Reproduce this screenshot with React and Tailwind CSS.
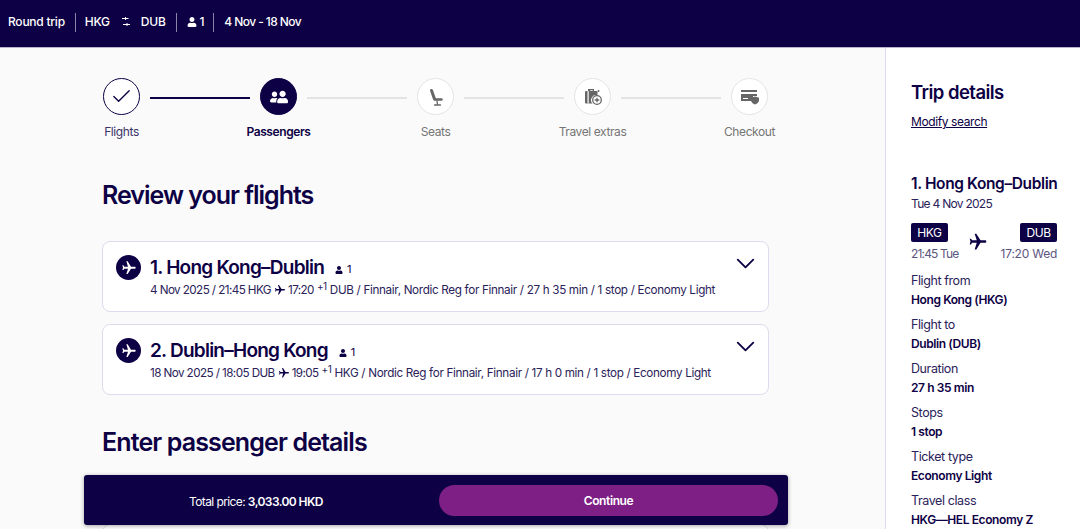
import { Check, ChevronDown } from "lucide-react";
import { MdFlight } from "react-icons/md";
import { FaUser, FaUserFriends } from "react-icons/fa";

const steps = [
  { label: "Flights", state: "done" },
  { label: "Passengers", state: "active" },
  { label: "Seats", state: "todo" },
  { label: "Travel extras", state: "todo" },
  { label: "Checkout", state: "todo" },
];

const details = [
  ["Flight from", "Hong Kong (HKG)"],
  ["Flight to", "Dublin (DUB)"],
  ["Duration", "27 h 35 min"],
  ["Stops", "1 stop"],
  ["Ticket type", "Economy Light"],
  ["Travel class", "HKG—HEL Economy Z"],
];

function SeatIcon() {
  return (
    <svg width="20" height="20" viewBox="0 0 20 20" fill="none" stroke="#666" strokeLinecap="round">
      <path d="M5.500 3.500L8.500 12" strokeWidth="3" />
      <path d="M9 12.500h6.500" strokeWidth="2.400" />
      <path d="M11 14l.5 3.500M8.500 18h6" strokeWidth="1.300" />
    </svg>
  );
}

function LuggageIcon() {
  return (
    <svg width="20" height="20" viewBox="0 0 20 20" fill="#666">
      <path d="M6 2h5v2h2.500a1 1 0 0 1 1 1v3.200a5 5 0 0 0-5 8.300H3a1 1 0 0 1-1-1V5a1 1 0 0 1 1-1h2V2zm1.200 1.200V4h2.600v-.8z" fillRule="evenodd" />
      <rect x="4.500" y="4" width="1.200" height="12.500" fill="#fff" />
      <circle cx="14" cy="13" r="4.300" fill="none" stroke="#666" strokeWidth="1.300" />
      <path d="M14 10.700v4.600M11.700 13h4.600" stroke="#666" strokeWidth="1.300" />
      <circle cx="15.500" cy="4" r="1" />
    </svg>
  );
}

function CardIcon() {
  return (
    <svg width="20" height="20" viewBox="0 0 20 20" fill="#666">
      <rect x="1" y="3" width="16" height="2" />
      <path d="M1 7h16v2h-4v2.500c0 .9.200 1.700.5 2.500H1zM3 11v1h5v-1z" fillRule="evenodd" />
      <path d="M15 9.500l4 1.200v2.300c0 2-1.700 3.500-4 4.500-2.300-1-4-2.500-4-4.500v-2.300z" />
    </svg>
  );
}

function StepIcon({ label }) {
  if (label === "Flights") return <Check size={23} color="#0d0044" strokeWidth={1.4} />;
  if (label === "Passengers") return <FaUserFriends size={18} color="#fff" className="-scale-x-100" />;
  if (label === "Seats") return <SeatIcon />;
  if (label === "Travel extras") return <LuggageIcon />;
  return <CardIcon />;
}

function Stepper() {
  return (
    <div className="flex items-start ml-[103px] w-[665px]">
      {steps.map((step, i) => (
        <div key={step.label} className={i === 0 ? "flex items-start" : "flex items-start flex-1"}>
          {i > 0 && (
            <div className={`flex-1 h-[2px] mt-[19px] mx-[10px] ${step.state === "todo" ? "bg-[#e4e4e4]" : "bg-[#0d0044]"}`} />
          )}
          <div className="flex flex-col items-center w-[37px] shrink-0">
            <div
              className={`w-[37px] h-[37px] rounded-full flex items-center justify-center border ${
                step.state === "active"
                  ? "bg-[#0d0044] border-[#0d0044]"
                  : step.state === "done"
                    ? "bg-white border-[#0d0044]"
                    : "bg-white border-[#e4e4e4]"
              }`}
            >
              <StepIcon label={step.label} />
            </div>
            <span
              className={`mt-[9px] text-[12px] leading-[16px] whitespace-nowrap ${
                step.state === "active"
                  ? "font-semibold text-[#0d0044]"
                  : step.state === "done"
                    ? "text-[#3a3268]"
                    : "text-[#757575]"
              }`}
            >
              {step.label}
            </span>
          </div>
        </div>
      ))}
    </div>
  );
}

function FlightCard({ title, date, dep, arrIata, rest }) {
  return (
    <div className="relative h-[71px] rounded-[8px] border border-[#dcdcee] bg-white pl-[13px] pt-[13px] flex gap-[9px]">
      <div className="w-[25px] h-[25px] rounded-full bg-[#0d0044] flex items-center justify-center shrink-0">
        <MdFlight size={16} color="#fff" className="rotate-90" />
      </div>
      <div className="min-w-0">
        <div className="flex items-center h-[25px]">
          <h3 className="text-[19px] leading-[25px] font-semibold text-[#0d0044] tracking-[-0.04em]">{title}</h3>
          <span className="flex items-center text-[11px] text-[#0d0044] mt-[4px] ml-[11px]">
            <FaUser size={8} className="mr-[4px]" />1
          </span>
        </div>
        <p className="mt-[2px] text-[11.7px] leading-[16px] text-[#2a2259] whitespace-nowrap flex items-center">
          <span className="tracking-[-0.05em]">{date}</span>
          <MdFlight size={12} color="#0d0044" className="rotate-90 ml-[3px] mr-[2px]" />
          <span className="tracking-[-0.05em]">{dep}</span>
          <sup className="text-[10px] ml-[3px] mr-[3px] mt-[2px]">+1</sup>
          <span className="tracking-[-0.0285em]">{arrIata} / {rest}</span>
        </p>
      </div>
      <ChevronDown size={31} strokeWidth={1.4} color="#0d0044" className="absolute right-[7px] top-[6px]" />
    </div>
  );
}

function Sidebar() {
  return (
    <aside className="w-[195px] shrink-0 border-l border-[#dcdcee] bg-white pl-[25px] pr-[23px] pt-[32px]">
      <h2 className="text-[18.500px] leading-[24px] font-semibold text-[#0d0044] tracking-[-0.03em]">Trip details</h2>
      <a className="block mt-[10px] text-[12px] leading-[16px] text-[#0d0044] underline">Modify search</a>

      <h3 className="mt-[44px] text-[15.500px] leading-[20px] font-semibold text-[#0d0044] tracking-[-0.025em] whitespace-nowrap">
        1. Hong Kong–Dublin
      </h3>
      <p className="mt-[2px] text-[12px] leading-[16px] text-[#2a2259] tracking-[-0.06em]">Tue 4 Nov 2025</p>

      <div className="mt-[11px] flex justify-between">
        <div>
          <span className="block w-[37px] h-[19px] bg-[#0d0044] rounded-[2px] text-white text-[12px] leading-[19px] text-center">HKG</span>
          <span className="block mt-[4px] text-[12px] leading-[16px] text-[#5b5580] whitespace-nowrap tracking-[-0.07em]">21:45 Tue</span>
        </div>
        <MdFlight size={20} color="#0d0044" className="rotate-90 mt-[9px] -ml-[4px]" />
        <div className="flex flex-col items-end">
          <span className="block w-[37px] h-[19px] bg-[#0d0044] rounded-[2px] text-white text-[12px] leading-[19px] text-center">DUB</span>
          <span className="block mt-[4px] text-[12px] leading-[16px] text-[#5b5580] whitespace-nowrap tracking-[-0.02em]">17:20 Wed</span>
        </div>
      </div>

      <dl className="mt-[8px]">
        {details.map(([label, value]) => (
          <div key={label} className="h-[44px] pt-[3px]">
            <dt className="text-[12.500px] leading-[16px] text-[#2a2259]">{label}</dt>
            <dd className="mt-[3px] text-[12px] leading-[16px] font-semibold text-[#0d0044] whitespace-nowrap">{value}</dd>
          </div>
        ))}
      </dl>
    </aside>
  );
}

export default function App() {
  return (
    <div className="relative h-[529px] w-[1080px] overflow-hidden bg-[#fafafa] font-['Inter',sans-serif] tracking-[-0.025em]">
      {/* top bar */}
      <header className="h-[48px] bg-[#0d0044] border-b border-[#b9b6cf] flex items-center pl-[8px] pb-[3px] text-white text-[12px] font-medium tracking-[-0.02em]">
        <span>Round trip</span>
        <span className="w-px h-[19px] bg-[#8a85a8] ml-[10px] mr-[9px]" />
        <span>HKG</span>
        <svg width="10" height="12" viewBox="0 0 10 12" className="ml-[11px] mr-[10px]" fill="none" stroke="#fff" strokeWidth="1">
          <path d="M1 2.500h6.500M4.500 1v3M2 8.500h7M6 7v3" />
        </svg>
        <span>DUB</span>
        <span className="w-px h-[19px] bg-[#8a85a8] ml-[10px] mr-[10px]" />
        <FaUser size={10} />
        <span className="ml-[3px]">1</span>
        <span className="w-px h-[19px] bg-[#8a85a8] ml-[9px] mr-[10px]" />
        <span className="tracking-[-0.048em]">4 Nov - 18 Nov</span>
      </header>

      <div className="flex h-[481px]">
        <main className="w-[885px] shrink-0 pt-[30px]">
          <Stepper />
          <div className="ml-[102px] w-[667px]">
            <h1 className="mt-[39px] text-[25px] leading-[32px] font-semibold text-[#0d0044] tracking-[-0.04em]">Review your flights</h1>
            <div className="mt-[30px] flex flex-col gap-[12px]">
              <FlightCard
                title="1. Hong Kong–Dublin"
                date="4 Nov 2025 / 21:45 HKG"
                dep="17:20"
                arrIata="DUB"
                rest="Finnair, Nordic Reg for Finnair / 27 h 35 min / 1 stop / Economy Light"
              />
              <FlightCard
                title="2. Dublin–Hong Kong"
                date="18 Nov 2025 / 18:05 DUB"
                dep="19:05"
                arrIata="HKG"
                rest="Nordic Reg for Finnair, Finnair / 17 h 0 min / 1 stop / Economy Light"
              />
            </div>
            <h2 className="mt-[31px] text-[25px] leading-[32px] font-semibold text-[#0d0044] tracking-[-0.035em]">Enter passenger details</h2>
            <div className="mt-[66px] h-[40px] rounded-t-[8px] border border-[#dcdcee] bg-white" />
          </div>
        </main>
        <Sidebar />
      </div>

      {/* sticky price bar */}
      <div className="absolute left-[84px] top-[475px] w-[704px] h-[50px] rounded-[3px] bg-[#0d0044] shadow-[0_1px_4px_rgba(0,0,0,0.35)] flex items-center pl-[105px] pr-[10px]">
        <p className="text-[12px] text-white whitespace-nowrap tracking-[-0.05em] mt-[3px]">
          Total price: <span className="font-semibold">3,033.00 HKD</span>
        </p>
        <button className="ml-auto w-[339px] h-[31px] pt-[1px] rounded-full bg-[#7d1f85] text-white text-[12px] font-semibold">Continue</button>
      </div>
    </div>
  );
}
